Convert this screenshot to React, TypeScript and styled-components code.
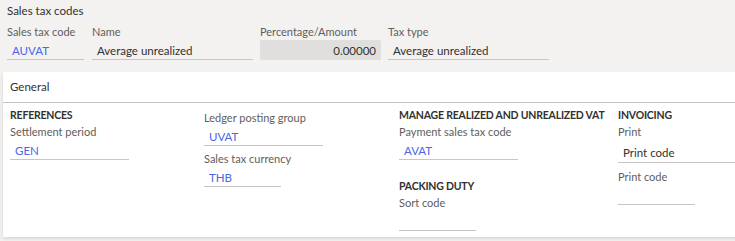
import React from "react";
import styled, { createGlobalStyle } from "styled-components";

const Global = createGlobalStyle`
  html, body { margin: 0; padding: 0; background: #f3f2f1; overflow: hidden; }
  body { font-family: "Segoe UI", Lato, "Open Sans", sans-serif; color: #323130; }
  * { box-sizing: border-box; }
`;

const Page = styled.div`
  width: 735px;
  height: 241px;
  background: #f3f2f1;
  overflow: hidden;
`;

const Header = styled.div`
  padding: 3px 7px 0 7px;
  height: 72px;
`;

const Title = styled.div`
  font-size: 11.5px;
  line-height: 16px;
  color: #323130;
`;

const TopRow = styled.div`
  display: flex;
  gap: 7px;
  margin-top: 5px;
`;

const Field = styled.div<{ $w: number; $ml?: number }>`
  width: ${(p) => p.$w}px;
  margin-left: ${(p) => p.$ml ?? 0}px;
  display: flex;
  flex-direction: column;
`;

const Label = styled.div`
  font-size: 11px;
  line-height: 16px;
  color: #605e5c;
  white-space: nowrap;
`;

const Input = styled.div<{ $link?: boolean; $ro?: boolean; $h?: number; $pt?: number; $right?: boolean }>`
  height: ${(p) => p.$h ?? 20}px;
  padding: ${(p) => p.$pt ?? 3}px 5px 0 5px;
  border-bottom: 1px solid ${(p) => (p.$ro ? "transparent" : "#c8c6c4")};
  background: ${(p) => (p.$ro ? "#e1dfdd" : "transparent")};
  border-radius: ${(p) => (p.$ro ? "2px" : "0")};
  font-size: 11.5px;
  line-height: 16px;
  color: ${(p) => (p.$link ? "#4a67e6" : "#323130")};
  text-align: ${(p) => (p.$right ? "right" : "left")};
  white-space: nowrap;
  overflow: hidden;
`;

const Card = styled.div`
  margin-left: 3px;
  width: 760px;
  height: 165px;
  background: #ffffff;
  box-shadow: 0 1.6px 3.6px rgba(0, 0, 0, 0.13), 0 0.3px 0.9px rgba(0, 0, 0, 0.11);
`;

const CardHeader = styled.div`
  height: 31px;
  border-bottom: 1px solid #c8c6c4;
  padding: 7px 7px 0 7px;
  font-size: 11.5px;
  line-height: 16px;
  color: #323130;
`;

const Columns = styled.div`
  display: grid;
  grid-template-columns: 194px 195px 219px 1fr;
  padding: 4px 0 0 7px;
`;

const Column = styled.div<{ $top?: number }>`
  display: flex;
  flex-direction: column;
  padding-top: ${(p) => p.$top ?? 0}px;
`;

const Heading = styled.div`
  font-size: 10.5px;
  line-height: 16px;
  font-weight: 700;
  letter-spacing: -0.2px;
  color: #323130;
  text-transform: uppercase;
  white-space: nowrap;
  margin-bottom: 1px;
`;

const Group = styled.div<{ $w: number; $mb?: number }>`
  width: ${(p) => p.$w}px;
  display: flex;
  flex-direction: column;
  margin-bottom: ${(p) => p.$mb ?? 0}px;
`;

export default function App() {
  return (
    <Page>
      <Global />
      <Header>
        <Title>Sales tax codes</Title>
        <TopRow>
          <Field $w={77}>
            <Label>Sales tax code</Label>
            <Input $link>AUVAT</Input>
          </Field>
          <Field $w={161} $ml={1}>
            <Label>Name</Label>
            <Input>Average unrealized</Input>
          </Field>
          <Field $w={121}>
            <Label>Percentage/Amount</Label>
            <Input $ro $right>0.00000</Input>
          </Field>
          <Field $w={161}>
            <Label>Tax type</Label>
            <Input>Average unrealized</Input>
          </Field>
        </TopRow>
      </Header>
      <Card>
        <CardHeader>General</CardHeader>
        <Columns>
          <Column>
            <Heading>References</Heading>
            <Group $w={119}>
              <Label>Settlement period</Label>
              <Input $link>GEN</Input>
            </Group>
          </Column>
          <Column $top={3}>
            <Group $w={119} $mb={5}>
              <Label>Ledger posting group</Label>
              <Input $link>UVAT</Input>
            </Group>
            <Group $w={77}>
              <Label>Sales tax currency</Label>
              <Input $link>THB</Input>
            </Group>
          </Column>
          <Column>
            <Heading>Manage realized and unrealized VAT</Heading>
            <Group $w={119} $mb={18}>
              <Label>Payment sales tax code</Label>
              <Input $link>AVAT</Input>
            </Group>
            <Heading>Packing duty</Heading>
            <Group $w={77}>
              <Label>Sort code</Label>
              <Input />
            </Group>
          </Column>
          <Column>
            <Heading>Invoicing</Heading>
            <Group $w={130} $mb={6}>
              <Label>Print</Label>
              <Input $h={23} $pt={5}>Print code</Input>
            </Group>
            <Group $w={77}>
              <Label>Print code</Label>
              <Input />
            </Group>
          </Column>
        </Columns>
      </Card>
    </Page>
  );
}
